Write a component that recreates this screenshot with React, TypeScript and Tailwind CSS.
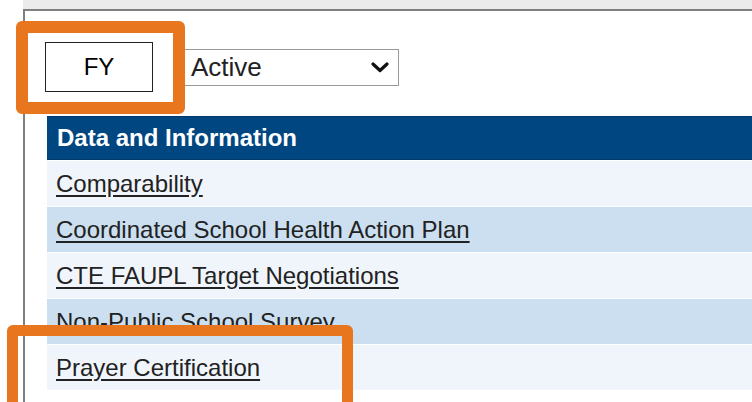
const links = [
  'Comparability',
  'Coordinated School Health Action Plan',
  'CTE FAUPL Target Negotiations',
  'Non-Public School Survey',
  'Prayer Certification',
];

function Chevron() {
  return (
    <svg width="18" height="11" viewBox="0 0 18 11" className="shrink-0">
      <polyline points="2,2 9,8.5 16,2" fill="none" stroke="#111" strokeWidth="3.2" strokeLinecap="round" strokeLinejoin="round" />
    </svg>
  );
}

export default function App() {
  return (
    <div className="relative w-[752px] h-[402px] overflow-hidden bg-white font-['Liberation_Sans',Arial,sans-serif]">
      <div className="ml-[23px]">
        <div className="h-[9px] bg-[#ebebeb]" />
        <div className="border-t-2 border-l-2 border-[#7f7f7f] h-[400px] pl-[20px]">
          {/* filter row */}
          <div className="flex items-center mt-[31px] h-[50px]">
            <div className="w-[108px] h-[50px] border border-[#222] flex items-center justify-center text-[24px] text-black">
              FY
            </div>
            <div className="ml-[29px] w-[217px] h-[37px] border border-[#9a9a9a] flex items-center justify-between pl-[8px] pr-[9px]">
              <span className="text-[26px] leading-none text-[#222]">Active</span>
              <Chevron />
            </div>
          </div>

          {/* links table */}
          <div className="mt-[24px] ml-[2px]">
            <div className="h-[44px] bg-[#004680] border-y border-[#003a6c] flex items-center pl-[10px]">
              <span className="text-[24px] font-bold text-white leading-none">Data and Information</span>
            </div>
            {links.map((label, i) => (
              <div
                key={label}
                className={`h-[45px] mt-px flex items-center pl-[9px] ${i % 2 === 0 ? 'bg-[#f0f5fb]' : 'bg-[#cbdff1]'}`}
              >
                <a href="#" className="text-[24px] leading-none text-[#222] underline underline-offset-[3px]">
                  {label}
                </a>
              </div>
            ))}
          </div>
        </div>
      </div>

      {/* highlight callouts */}
      <div className="absolute left-[16px] top-[21px] w-[169px] h-[93px] border-[12px] border-[#e8761f] rounded-[6px]" />
      <div className="absolute left-[7px] top-[325px] w-[346px] h-[100px] border-[11px] border-[#e8761f] rounded-[6px]" />
    </div>
  );
}
